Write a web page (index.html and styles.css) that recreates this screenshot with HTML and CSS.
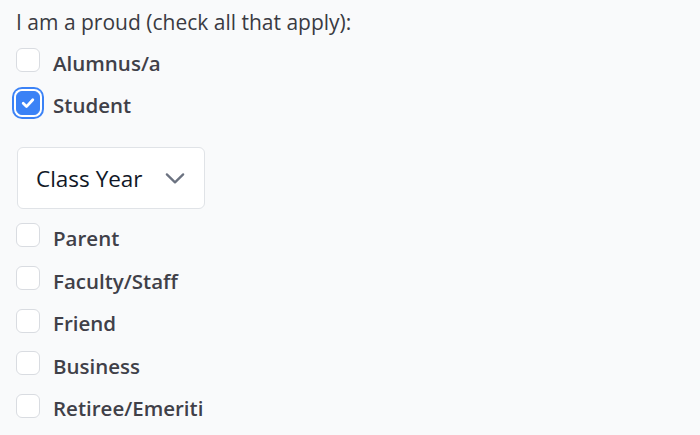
FILE: index.html
```html
<!DOCTYPE html>
<html>
<head>
  <meta charset="utf-8">
  <title>Affiliation</title>
  <link rel="stylesheet" href="styles.css">
</head>
<body>
  <div class="form">
    <p class="legend">I am a proud (check all that apply):</p>

    <label class="option"><input type="checkbox"> <span>Alumnus/a</span></label>
    <label class="option"><input type="checkbox" class="focused" checked> <span>Student</span></label>

    <div class="select-wrap">
      <select class="year">
        <option>Class Year</option>
      </select>
      <svg class="chevron" width="24" height="24" viewBox="0 0 20 20">
        <path d="M3.2 7l6.8 6.6 6.8-6.6" fill="none" stroke="#6b7280" stroke-width="1.9" stroke-linecap="round" stroke-linejoin="round"/>
      </svg>
    </div>

    <label class="option"><input type="checkbox"> <span>Parent</span></label>
    <label class="option"><input type="checkbox"> <span>Faculty/Staff</span></label>
    <label class="option"><input type="checkbox"> <span>Friend</span></label>
    <label class="option"><input type="checkbox"> <span>Business</span></label>
    <label class="option"><input type="checkbox"> <span>Retiree/Emeriti</span></label>
  </div>
</body>
</html>
```

FILE: styles.css
```css
body {
  margin: 0;
  background: #f9fafb;
  font-family: "Open Sans", sans-serif;
  color: #3a3a42;
}

.form {
  padding: 8px 16px;
  display: flex;
  flex-direction: column;
  align-items: flex-start;
}

.legend {
  margin: 0 0 3px 0;
  font-size: 21px;
  line-height: 28px;
}

.option {
  display: flex;
  align-items: center;
  height: 42.6px;
  font-size: 20.5px;
  font-weight: 600;
  color: #404048;
}

.option span {
  margin-left: 13px;
  padding-top: 5px;
}

.option input {
  appearance: none;
  -webkit-appearance: none;
  margin: 0;
  width: 24px;
  height: 24px;
  border: 1px solid #d9dce1;
  border-radius: 6px;
  background: #fff;
}

.option input:checked {
  background: #3b82f6;
  border-color: #3b82f6;
  background-image: url("data:image/svg+xml;utf8,<svg xmlns='http://www.w3.org/2000/svg' viewBox='0 0 16 16'><path d='M4.5 8.2l2.4 2.4 4.6-5' fill='none' stroke='white' stroke-width='2' stroke-linecap='round' stroke-linejoin='round'/></svg>");
  background-size: 100% 100%;
}

.option input.focused {
  box-shadow: 0 0 0 2px #fff, 0 0 0 4px #3b82f6;
}

.select-wrap {
  position: relative;
  margin: 23px 0 5px 1px;
}

.year {
  appearance: none;
  -webkit-appearance: none;
  width: 188px;
  height: 62px;
  padding: 0 18px;
  border: 1px solid #e0e3e7;
  border-radius: 6px;
  background: #fff;
  font-family: "Open Sans", sans-serif;
  font-size: 22.5px;
  color: #111827;
}

.chevron {
  position: absolute;
  right: 18px;
  top: 19px;
  pointer-events: none;
}
```
